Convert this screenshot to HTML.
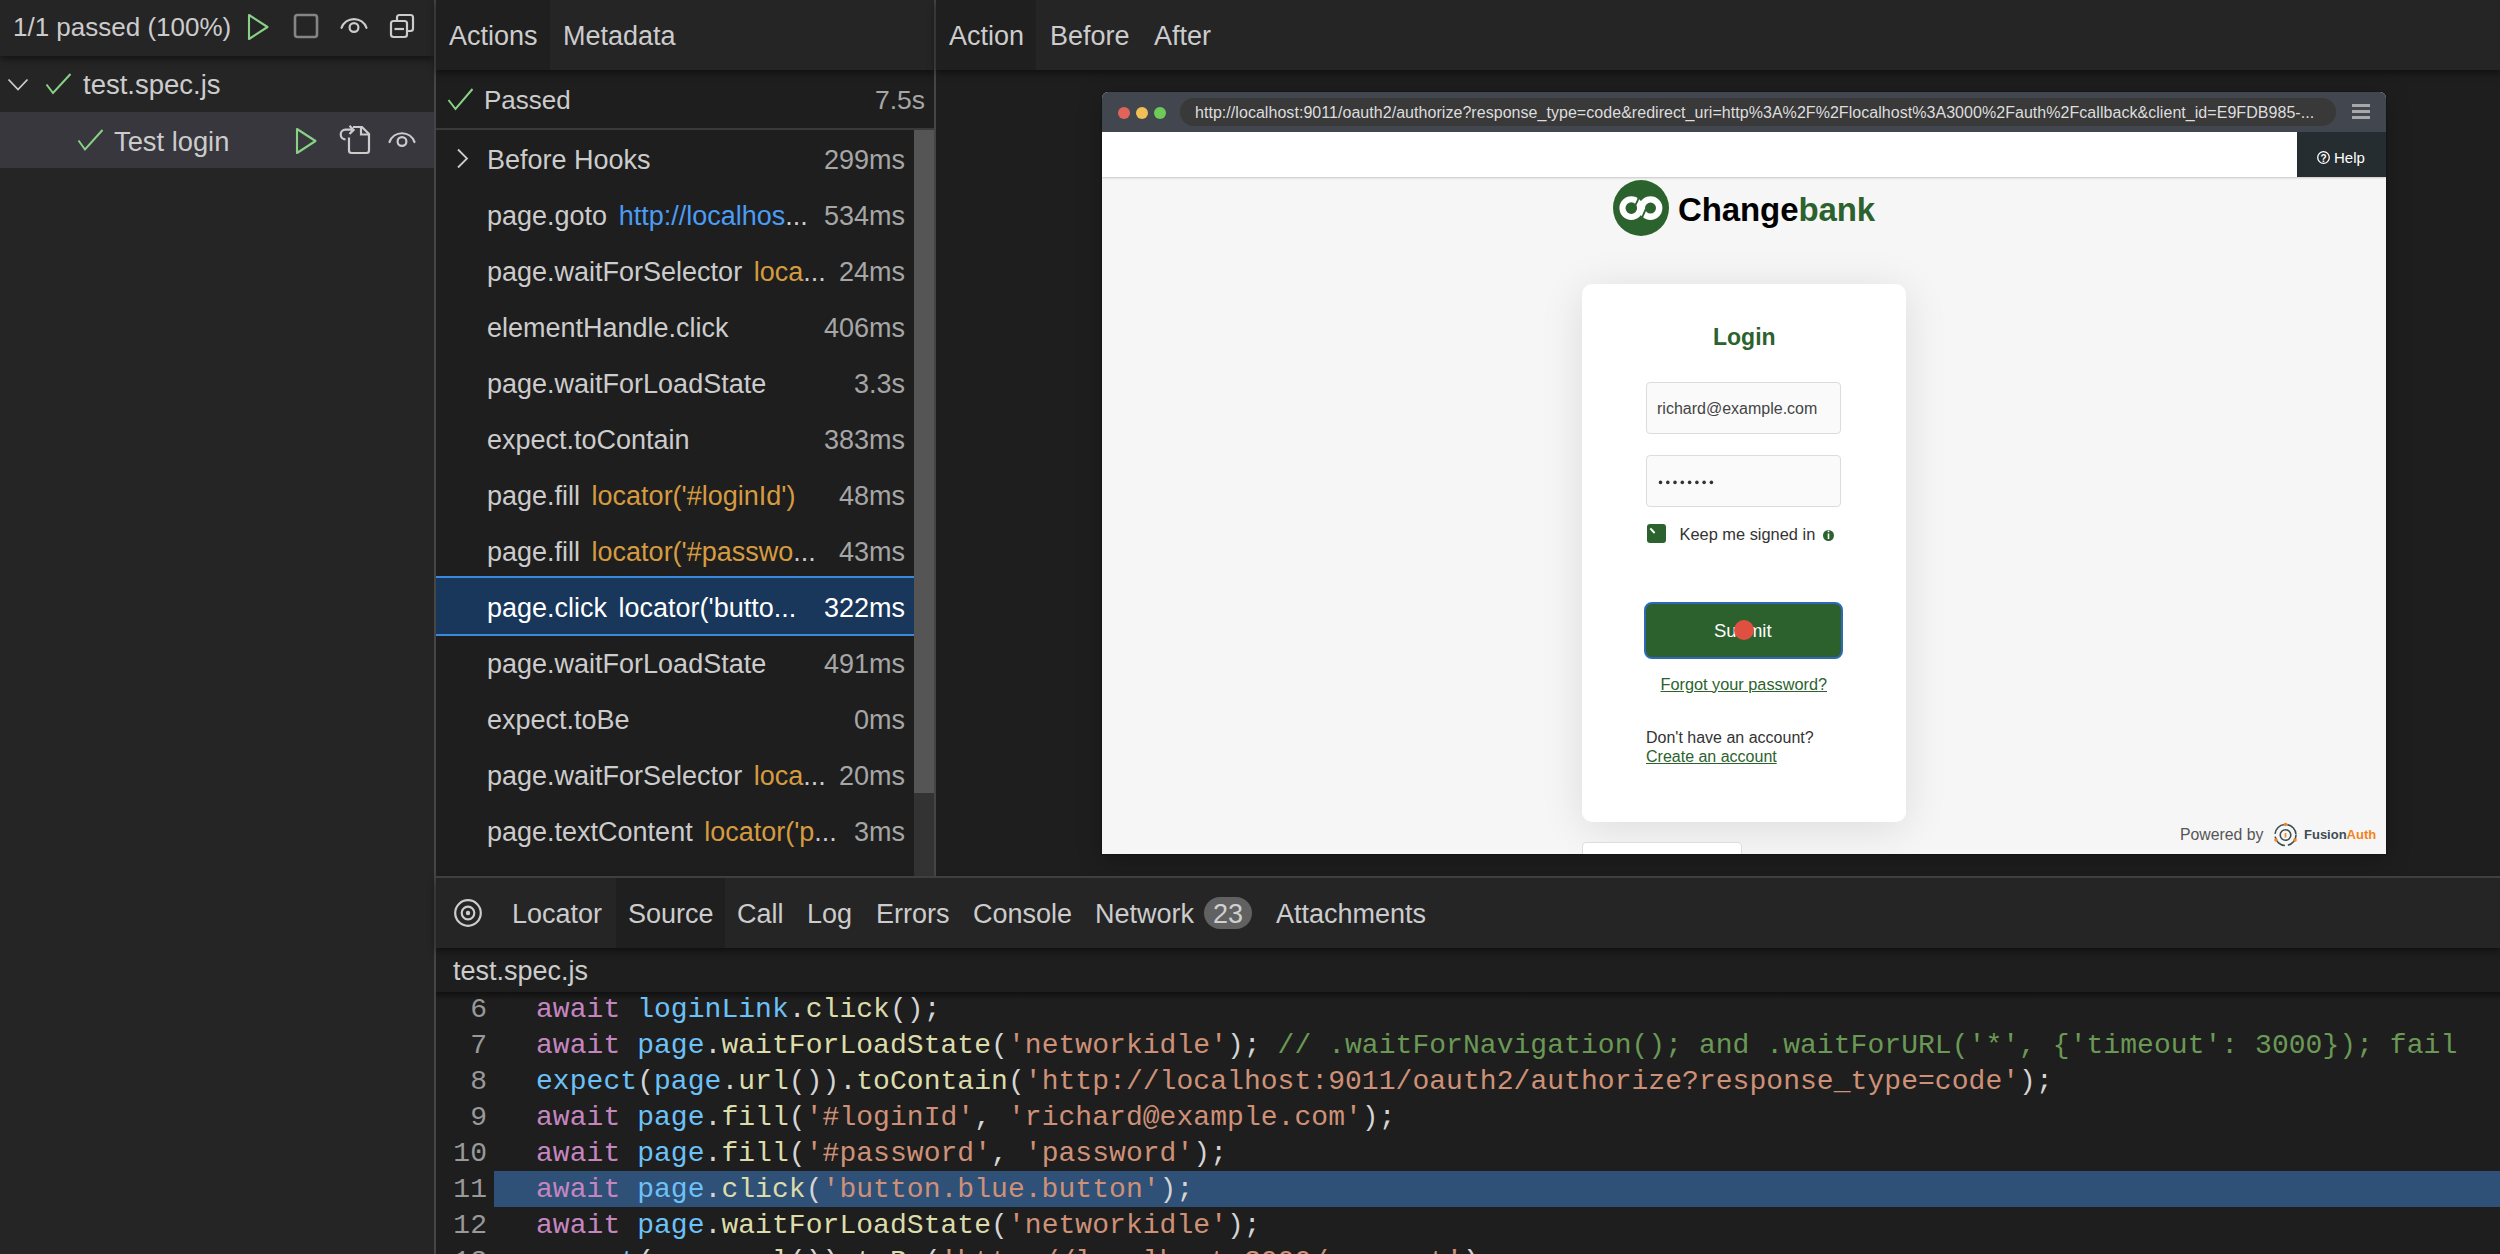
<!DOCTYPE html>
<html><head><meta charset="utf-8">
<style>
*{box-sizing:border-box;margin:0;padding:0}
html,body{width:2500px;height:1254px;overflow:hidden;background:#1e1e1e;font-family:"Liberation Sans",sans-serif;color:#cccccc}
.a{position:absolute}
.t{position:absolute;white-space:nowrap;line-height:1}
svg{position:absolute;overflow:visible}
.row{position:absolute;left:436px;width:478px;height:56px}
.row .n{position:absolute;left:51px;top:17px;font-size:27px;line-height:1;white-space:nowrap;color:#cccccc;word-spacing:4px}
.row .d{position:absolute;right:9px;top:17px;font-size:27px;line-height:1;white-space:nowrap;color:#a6a6a6}
.o{color:#d59b41}
.b{color:#4b9cf5}
.code{position:absolute;left:436px;width:2064px;height:36px;font-family:"Liberation Mono",monospace;font-size:28px;line-height:36px;white-space:pre;color:#d4d4d4;letter-spacing:0.05px}
.code .ln{position:absolute;right:2013px;top:2px;color:#999999}
.code .c{position:absolute;left:100px;top:2px}
.k{color:#c586c0}.v{color:#6cc1f7}.f{color:#dcdcaa}.s{color:#ce9178}.cm{color:#6a9955}
</style></head><body>

<!-- LEFT SIDEBAR -->
<div class="a" style="left:0;top:0;width:434px;height:1254px;background:#252526"></div>
<div class="a" style="left:0;top:0;width:434px;height:56px;background:#252526;box-shadow:0 3px 7px rgba(0,0,0,.5)"></div>
<div class="t" style="left:13px;top:14px;font-size:26px;color:#cccccc">1/1 passed (100%)</div>
<!-- play -->
<svg style="left:0;top:0" width="434" height="60"><path d="M249 15 L267.5 27 L249 39 Z" fill="none" stroke="#89d185" stroke-width="2.1" stroke-linejoin="round"/>
<rect x="295" y="15" width="22" height="22" rx="2.5" fill="none" stroke="#858585" stroke-width="2.6"/>
<path d="M341.5 27.8 A13.3 13.3 0 0 1 366.5 27.8" fill="none" stroke="#cccccc" stroke-width="2.2" stroke-linecap="round"/>
<circle cx="354" cy="27.5" r="4.4" fill="none" stroke="#cccccc" stroke-width="2.2"/>
<rect x="397" y="15" width="16" height="16" rx="2.5" fill="none" stroke="#cccccc" stroke-width="2.2"/>
<rect x="391" y="21" width="16" height="16" rx="2.5" fill="#252526" stroke="#cccccc" stroke-width="2.2"/>
<path d="M394.5 29 H404" stroke="#cccccc" stroke-width="2.2"/>
</svg>
<!-- tree -->
<svg style="left:0;top:0" width="434" height="170">
<path d="M8.5 79.5 L18 89.5 L27.5 79.5" fill="none" stroke="#cccccc" stroke-width="1.8"/>
<path d="M46.5 84.5 L53 93 L70.5 74" fill="none" stroke="#89d185" stroke-width="2.0"/>
</svg>
<div class="t" style="left:83px;top:71px;font-size:27.5px;color:#cccccc">test.spec.js</div>
<div class="a" style="left:0;top:112px;width:434px;height:56px;background:#37373d"></div>
<svg style="left:0;top:0" width="434" height="170">
<path d="M78.5 140.5 L85 149.5 L102.5 130" fill="none" stroke="#89d185" stroke-width="2.0"/>
<path d="M297 129 L315.5 141 L297 153 Z" fill="none" stroke="#89d185" stroke-width="2.1" stroke-linejoin="round"/>
<path d="M349 137.5 V150.5 Q349 153 351.5 153 H366.5 Q369 153 369 150.5 V134 L362 127 H353 M361 127.5 V134.5 H368.5" fill="none" stroke="#cccccc" stroke-width="2.2"/>
<path d="M345.5 139.3 A4.8 4.8 0 0 1 345.5 129.7 H353.5 M349.5 125.8 L353.6 129.9 L349.5 134" fill="none" stroke="#cccccc" stroke-width="2.2"/>
<path d="M389.5 142 A13.3 13.3 0 0 1 414.5 142" fill="none" stroke="#cccccc" stroke-width="2.2" stroke-linecap="round"/>
<circle cx="402" cy="141.5" r="4.4" fill="none" stroke="#cccccc" stroke-width="2.2"/>
</svg>
<div class="t" style="left:114px;top:128px;font-size:27.3px;color:#cccccc">Test login</div>

<!-- divider -->
<div class="a" style="left:434px;top:0;width:2px;height:1254px;background:#454545"></div>

<!-- MIDDLE: actions -->
<div class="a" style="left:436px;top:0;width:498px;height:876px;background:#1e1e1e"></div>
<div class="a" style="left:436px;top:0;width:498px;height:70px;background:#252526;box-shadow:0 3px 7px rgba(0,0,0,.5)"></div>
<div class="a" style="left:436px;top:0;width:114px;height:70px;background:#1f1f1f"></div>
<div class="t" style="left:449px;top:23px;font-size:27px">Actions</div>
<div class="t" style="left:563px;top:23px;font-size:27px">Metadata</div>

<svg style="left:0;top:0" width="934" height="140"><path d="M448.5 100 L455.5 109 L472.5 89" fill="none" stroke="#89d185" stroke-width="2.0"/></svg>
<div class="t" style="left:484px;top:87px;font-size:26px">Passed</div>
<div class="t" style="right:1575px;top:87px;font-size:26.5px;color:#a6a6a6">7.5s</div>
<div class="a" style="left:436px;top:128px;width:498px;height:2px;background:#3a3a3a"></div>

<!-- list -->
<svg style="left:0;top:0" width="934" height="200"><path d="M458 149.5 L467 158.5 L458 167.5" fill="none" stroke="#cccccc" stroke-width="1.8"/></svg>
<div class="row" style="top:130px"><span class="n" style="word-spacing:0">Before Hooks</span><span class="d">299ms</span></div>
<div class="row" style="top:186px"><span class="n">page.goto <span class="b">http://localhos</span>...</span><span class="d">534ms</span></div>
<div class="row" style="top:242px"><span class="n">page.waitForSelector <span class="o">loca</span>...</span><span class="d">24ms</span></div>
<div class="row" style="top:298px"><span class="n">elementHandle.click</span><span class="d">406ms</span></div>
<div class="row" style="top:354px"><span class="n">page.waitForLoadState</span><span class="d">3.3s</span></div>
<div class="row" style="top:410px"><span class="n">expect.toContain</span><span class="d">383ms</span></div>
<div class="row" style="top:466px"><span class="n">page.fill <span class="o">locator('#loginId')</span></span><span class="d">48ms</span></div>
<div class="row" style="top:522px"><span class="n">page.fill <span class="o">locator('#passwo</span>...</span><span class="d">43ms</span></div>
<div class="row" style="top:576px;height:60px;background:#18375b;border-top:2px solid #3b89dc;border-bottom:2px solid #3b89dc"><span class="n" style="top:17px;color:#fff">page.click locator('butto...</span><span class="d" style="top:17px;color:#fff">322ms</span></div>
<div class="row" style="top:634px"><span class="n">page.waitForLoadState</span><span class="d">491ms</span></div>
<div class="row" style="top:690px"><span class="n">expect.toBe</span><span class="d">0ms</span></div>
<div class="row" style="top:746px"><span class="n">page.waitForSelector <span class="o">loca</span>...</span><span class="d">20ms</span></div>
<div class="row" style="top:802px"><span class="n">page.textContent <span class="o">locator('p</span>...</span><span class="d">3ms</span></div>
<!-- scrollbar -->
<div class="a" style="left:914px;top:130px;width:20px;height:746px;background:#333333"></div>
<div class="a" style="left:914px;top:130px;width:20px;height:663px;background:#555555"></div>

<!-- divider -->
<div class="a" style="left:934px;top:0;width:2px;height:876px;background:#454545"></div>

<!-- RIGHT: snapshot -->
<div class="a" style="left:936px;top:0;width:1564px;height:876px;background:#1e1e1e"></div>
<div class="a" style="left:936px;top:0;width:1564px;height:70px;background:#252526;box-shadow:0 3px 7px rgba(0,0,0,.5)"></div>
<div class="a" style="left:936px;top:0;width:100px;height:70px;background:#1f1f1f"></div>
<div class="t" style="left:949px;top:23px;font-size:27px">Action</div>
<div class="t" style="left:1050px;top:23px;font-size:27px">Before</div>
<div class="t" style="left:1154px;top:23px;font-size:27px">After</div>

<!-- browser frame -->
<div id="frame" class="a" style="left:1102px;top:92px;width:1284px;height:762px;background:#f6f6f6;border-radius:6px 6px 0 0;overflow:hidden;box-shadow:0 0 1.5px rgba(0,0,0,.9),0 6px 24px rgba(0,0,0,.25)">
  <div class="a" style="left:0;top:0;width:1284px;height:40px;background:#42474f"></div>
  <div class="a" style="left:16px;top:15px;width:12px;height:12px;border-radius:50%;background:#e0645a"></div>
  <div class="a" style="left:34px;top:15px;width:12px;height:12px;border-radius:50%;background:#f2bf57"></div>
  <div class="a" style="left:52px;top:15px;width:12px;height:12px;border-radius:50%;background:#6fcb57"></div>
  <div class="a" style="left:78px;top:6px;width:1156px;height:28px;border-radius:14px;background:#393939"></div>
  <div class="t" style="left:93px;top:13px;font-size:16px;color:#dddddd;letter-spacing:0.045px">http://localhost:9011/oauth2/authorize?response_type=code&amp;redirect_uri=http%3A%2F%2Flocalhost%3A3000%2Fauth%2Fcallback&amp;client_id=E9FDB985-...</div>
  <div class="a" style="left:1250px;top:12px;width:18px;height:3px;background:#a8a8a8"></div>
  <div class="a" style="left:1250px;top:18px;width:18px;height:3px;background:#a8a8a8"></div>
  <div class="a" style="left:1250px;top:24px;width:18px;height:3px;background:#a8a8a8"></div>
  <!-- page -->
  <div class="a" style="left:0;top:40px;width:1284px;height:45px;background:#ffffff;box-shadow:0 1px 2px rgba(0,0,0,.2)"></div>
  <div class="a" style="left:1195px;top:40px;width:89px;height:45px;background:#262d30"></div>
  <svg style="left:0;top:0" width="1284" height="100"><circle cx="1221.5" cy="65.5" r="5.8" fill="none" stroke="#fff" stroke-width="1.3"/><text x="1221.5" y="69.5" font-family="Liberation Sans" font-weight="bold" font-size="10" fill="#fff" text-anchor="middle">?</text></svg>
  <div class="t" style="left:1232px;top:58px;font-size:15px;color:#ffffff">Help</div>
  <!-- logo -->
  <svg style="left:0;top:0" width="1284" height="200">
    <circle cx="539" cy="116" r="28" fill="#2c622e"/>
    <circle cx="529.3" cy="116.1" r="8.85" fill="none" stroke="#fff" stroke-width="6.1"/>
    <circle cx="548.5" cy="116.1" r="8.7" fill="none" stroke="#fff" stroke-width="6.4"/>
    <path d="M533.2 113.5 Q536 109 537.2 104" fill="none" stroke="#2c622e" stroke-width="1.8"/>
    <path d="M543.9 117 Q541.5 122 539.8 126.5" fill="none" stroke="#2c622e" stroke-width="1.8"/>
  </svg>
  <div class="t" style="left:576px;top:101px;font-size:33px;font-weight:bold;color:#000;letter-spacing:-0.1px">Change<span style="color:#2c622e">bank</span></div>
  <!-- card -->
  <div class="a" style="left:480px;top:192px;width:324px;height:538px;background:#fff;border-radius:10px;box-shadow:0 6px 44px rgba(0,0,0,.11)"></div>
  <div class="t" style="left:611px;top:234px;font-size:23px;font-weight:bold;color:#2c622e">Login</div>
  <div class="a" style="left:544px;top:290px;width:195px;height:52px;background:#fafafa;border:1px solid #dcdcdc;border-radius:4px"></div>
  <div class="t" style="left:555px;top:309px;font-size:16px;color:#444">richard@example.com</div>
  <div class="a" style="left:544px;top:363px;width:195px;height:52px;background:#fafafa;border:1px solid #dcdcdc;border-radius:4px"></div>
  <svg style="left:0;top:0" width="700" height="420"><circle cx="558.5" cy="390.4" r="1.8" fill="#333"/><circle cx="565.8" cy="390.4" r="1.8" fill="#333"/><circle cx="573.0" cy="390.4" r="1.8" fill="#333"/><circle cx="580.3" cy="390.4" r="1.8" fill="#333"/><circle cx="587.6" cy="390.4" r="1.8" fill="#333"/><circle cx="594.9" cy="390.4" r="1.8" fill="#333"/><circle cx="602.1" cy="390.4" r="1.8" fill="#333"/><circle cx="609.4" cy="390.4" r="1.8" fill="#333"/></svg>
  <div class="a" style="left:545px;top:431.5px;width:19px;height:19px;background:#2c622e;border-radius:3px"></div>
  <div class="t" style="left:577.5px;top:434px;font-size:16.4px;color:#333">Keep me signed in</div>
  <svg style="left:0;top:0" width="1284" height="600"><circle cx="726.5" cy="443.5" r="5.5" fill="#2c622e"/><path d="M726.5 441.5 V447" stroke="#fff" stroke-width="1.6"/><circle cx="726.5" cy="439.3" r="0.9" fill="#fff"/><path d="M548.3 436.4 L552.6 441" stroke="#fff" stroke-width="2"/></svg>
  <div class="a" style="left:542px;top:510px;width:199px;height:57px;background:#2c612e;border:2px solid #3068b8;border-radius:8px"></div>
  <div class="t" style="left:612px;top:530.3px;font-size:18.5px;color:#fff">Submit</div>
  <div class="a" style="left:632px;top:528px;width:20px;height:20px;border-radius:50%;background:#e05040"></div>
  <div class="t" style="left:558.5px;top:583.5px;font-size:16.3px;color:#2c622e;text-decoration:underline">Forgot your password?</div>
  <div class="t" style="left:544px;top:638px;font-size:16px;color:#333">Don't have an account?</div>
  <div class="t" style="left:544px;top:657px;font-size:16px;color:#2c622e;text-decoration:underline">Create an account</div>
  <div class="a" style="left:480px;top:750px;width:160px;height:30px;background:#fff;border:1px solid #ddd;border-radius:4px"></div>
  <div class="t" style="left:1078px;top:735px;font-size:15.8px;color:#555">Powered by</div>
  <svg style="left:0;top:0" width="1284" height="762">
    <circle cx="1183.5" cy="743" r="10.5" fill="none" stroke="#3d4d52" stroke-width="1.6" stroke-dasharray="14 3"/>
    <circle cx="1183.5" cy="743" r="5.3" fill="none" stroke="#3d4d52" stroke-width="1.6"/>
    <circle cx="1183.5" cy="732.5" r="1.8" fill="#f58320"/><circle cx="1174" cy="748" r="1.8" fill="#f58320"/><circle cx="1193" cy="748" r="1.8" fill="#f58320"/>
    <path d="M1183.5 741 V745.5" stroke="#f58320" stroke-width="1.6"/>
  </svg>
  <div class="t" style="left:1202px;top:736px;font-size:13px;font-weight:bold;color:#3d4d52">Fusion<span style="color:#f58320">Auth</span></div>
</div>

<!-- BOTTOM PANEL -->
<div class="a" style="left:436px;top:876px;width:2064px;height:378px;background:#1e1e1e"></div>
<div class="a" style="left:436px;top:876px;width:2064px;height:2px;background:#444444"></div>
<div class="a" style="left:436px;top:878px;width:2064px;height:70px;background:#252526;box-shadow:0 3px 7px rgba(0,0,0,.5)"></div>
<div class="a" style="left:616px;top:878px;width:109px;height:70px;background:#1f1f1f"></div>
<svg style="left:0;top:0" width="600" height="950"><circle cx="468" cy="913" r="12.8" fill="none" stroke="#cccccc" stroke-width="2.2"/><circle cx="468" cy="913" r="6.3" fill="none" stroke="#cccccc" stroke-width="2.2"/><circle cx="468" cy="913" r="2.2" fill="#cccccc"/></svg>
<div class="t" style="left:512px;top:901px;font-size:27px">Locator</div>
<div class="t" style="left:628px;top:901px;font-size:27px">Source</div>
<div class="t" style="left:737px;top:901px;font-size:27px">Call</div>
<div class="t" style="left:807px;top:901px;font-size:27px">Log</div>
<div class="t" style="left:876px;top:901px;font-size:27px">Errors</div>
<div class="t" style="left:973px;top:901px;font-size:27px">Console</div>
<div class="t" style="left:1095px;top:901px;font-size:27px">Network</div>
<div class="a" style="left:1204px;top:897px;width:48px;height:32px;border-radius:16px;background:#616161"></div>
<div class="t" style="left:1213px;top:901px;font-size:27px;color:#d0d0d0">23</div>
<div class="t" style="left:1276px;top:901px;font-size:27px">Attachments</div>

<div class="t" style="left:453px;top:958px;font-size:27px">test.spec.js</div>
<div class="a" style="left:436px;top:992px;width:2064px;height:8px;background:linear-gradient(rgba(0,0,0,.45),rgba(0,0,0,0))"></div>

<div class="a" style="left:494px;top:1171px;width:2006px;height:36px;background:#2f5077"></div>
<div class="code" style="top:990px"><span class="ln">6</span><span class="c"><span class="k">await</span> <span class="v">loginLink</span>.<span class="f">click</span>();</span></div>
<div class="code" style="top:1026px"><span class="ln">7</span><span class="c"><span class="k">await</span> <span class="v">page</span>.<span class="f">waitForLoadState</span>(<span class="s">'networkidle'</span>); <span class="cm">// .waitForNavigation(); and .waitForURL('*', {'timeout': 3000}); fail</span></span></div>
<div class="code" style="top:1062px"><span class="ln">8</span><span class="c"><span class="v">expect</span>(<span class="v">page</span>.<span class="f">url</span>()).<span class="f">toContain</span>(<span class="s">'http://localhost:9011/oauth2/authorize?response_type=code'</span>);</span></div>
<div class="code" style="top:1098px"><span class="ln">9</span><span class="c"><span class="k">await</span> <span class="v">page</span>.<span class="f">fill</span>(<span class="s">'#loginId'</span>, <span class="s">'richard@example.com'</span>);</span></div>
<div class="code" style="top:1134px"><span class="ln">10</span><span class="c"><span class="k">await</span> <span class="v">page</span>.<span class="f">fill</span>(<span class="s">'#password'</span>, <span class="s">'password'</span>);</span></div>
<div class="code" style="top:1170px"><span class="ln">11</span><span class="c"><span class="k">await</span> <span class="v">page</span>.<span class="f">click</span>(<span class="s">'button.blue.button'</span>);</span></div>
<div class="code" style="top:1206px"><span class="ln">12</span><span class="c"><span class="k">await</span> <span class="v">page</span>.<span class="f">waitForLoadState</span>(<span class="s">'networkidle'</span>);</span></div>
<div class="code" style="top:1242px"><span class="ln">13</span><span class="c"><span class="v">expect</span>(<span class="v">page</span>.<span class="f">url</span>()).<span class="f">toBe</span>(<span class="s">'http://localhost:3000/account'</span>);</span></div>

</body></html>
